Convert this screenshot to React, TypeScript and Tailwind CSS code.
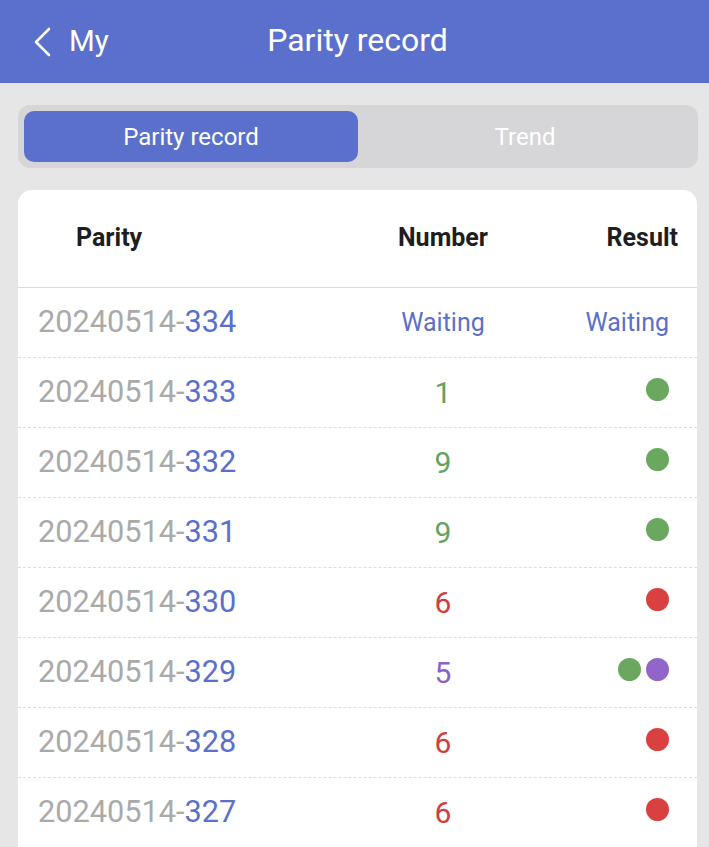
import React from "react";

type Row = {
  id: string;
  num: number | null;
  dots: string[];
};

const ROWS: Row[] = [
  { id: "334", num: null, dots: [] },
  { id: "333", num: 1, dots: ["green"] },
  { id: "332", num: 9, dots: ["green"] },
  { id: "331", num: 9, dots: ["green"] },
  { id: "330", num: 6, dots: ["red"] },
  { id: "329", num: 5, dots: ["green", "purple"] },
  { id: "328", num: 6, dots: ["red"] },
  { id: "327", num: 6, dots: ["red"] },
];

function numColor(n: number) {
  if (n === 5) return "text-[#8b62c6]";
  if (n % 2 === 0) return "text-[#cf3e3e]";
  return "text-[#62a35c]";
}

function Dot({ c }: { c: string }) {
  const cls =
    c === "green"
      ? "bg-[#6aa85f]"
      : c === "red"
      ? "bg-[#d94040]"
      : "bg-[#9166c8]";
  return <span className={`block w-[23px] h-[23px] rounded-full ${cls}`} />;
}

export default function App() {
  return (
    <div
      className="w-[709px] h-[847px] overflow-hidden bg-[#e6e6e6]"
      style={{ fontFamily: "Roboto, 'Noto Sans', sans-serif" }}
    >
      {/* Header */}
      <div className="relative h-[83px] bg-[#5b6fcc] flex items-center justify-center">
        <div className="absolute left-[33px] top-0 h-full flex items-center gap-[18px] text-white">
          <svg width="18" height="30" viewBox="0 0 18 30" fill="none">
            <path
              d="M16 2L3 15L16 28"
              stroke="white"
              strokeWidth="2.6"
              strokeLinecap="round"
              strokeLinejoin="round"
            />
          </svg>
          <span className="text-[29.5px] leading-none">My</span>
        </div>
        <span className="text-white text-[32px] leading-none -mt-[4px] ml-[6px]">
          Parity record
        </span>
      </div>

      {/* Tabs */}
      <div className="ml-[18px] mr-[11px] mt-[22px] h-[63px] rounded-[12px] bg-[#d6d6d8] p-[6px] flex">
        <div className="w-[334px] h-full rounded-[10px] bg-[#5b6fcc] flex items-center justify-center text-white text-[24px]">
          Parity record
        </div>
        <div className="flex-1 h-full flex items-center justify-center text-white text-[24px]">
          Trend
        </div>
      </div>

      {/* Card */}
      <div className="ml-[18px] mr-[12px] mt-[22px] bg-white rounded-t-[14px]">
        <div className="h-[98px] flex items-center border-b border-[#dcdcdc] text-[25px] font-bold text-[#1e1e1e] pb-[1px]">
          <div className="w-[320px] pl-[58px]">Parity</div>
          <div className="w-[210px] text-center">Number</div>
          <div className="flex-1 text-right pr-[19px]">Result</div>
        </div>
        {ROWS.map((r) => (
          <div
            key={r.id}
            className="h-[70px] flex items-center border-b border-dashed border-[#dedede]"
          >
            <div className="w-[320px] pl-[20px] text-[30.7px]">
              <span className="text-[#aaaaaa]">20240514-</span>
              <span className="text-[#5b6fcc]">{r.id}</span>
            </div>
            <div className="w-[210px] text-center">
              {r.num === null ? (
                <span className="text-[25px] text-[#5b6fcc]">Waiting</span>
              ) : (
                <span className={`text-[30px] ${numColor(r.num)}`}>{r.num}</span>
              )}
            </div>
            <div className="flex-1 flex justify-end pr-[28px]">
              {r.num === null ? (
                <span className="text-[25px] text-[#5b6fcc]">Waiting</span>
              ) : (
                <div className="flex gap-[5px] -mt-[7px] self-start">
                  {r.dots.map((d, i) => (
                    <Dot key={i} c={d} />
                  ))}
                </div>
              )}
            </div>
          </div>
        ))}
      </div>
    </div>
  );
}
